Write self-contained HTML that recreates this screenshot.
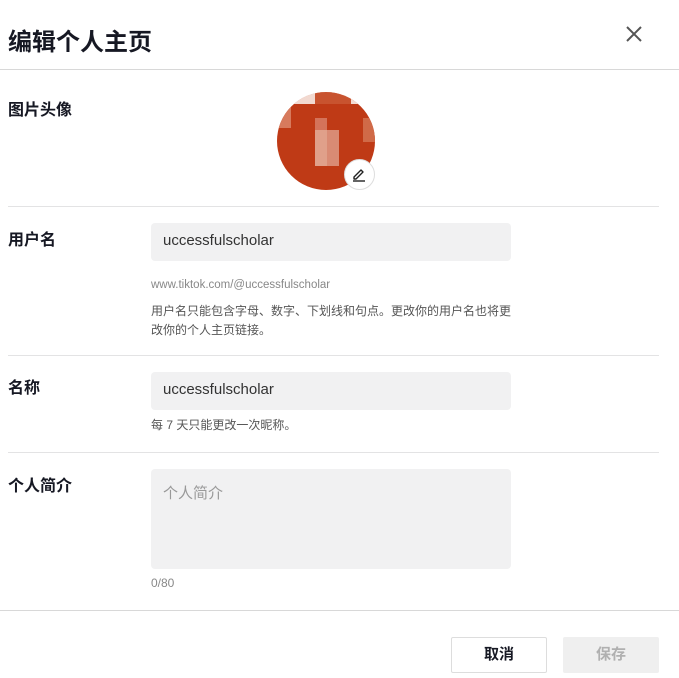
<!DOCTYPE html>
<html><head><meta charset="utf-8"><style>
*{margin:0;padding:0;box-sizing:border-box}
body{width:679px;height:678px;background:#fff;font-family:"Liberation Sans","Noto Sans CJK SC",sans-serif;color:#161823;position:relative;overflow:hidden}
.a{position:absolute}
.h1{left:8px;top:22px;font-size:24px;font-weight:bold}
.line{height:1px;background:#e3e3e4}
.lab{left:8px;font-size:16px;font-weight:bold}
.inp{background:#f1f1f2;border-radius:4px;left:151px;width:360px;height:38px;font-size:15px;color:#333;padding:9px 12px}
.small{left:151px;font-size:12px;color:#555;line-height:19px}
.btn{border-radius:2px;font-size:15px;font-weight:bold;text-align:center;line-height:34px}
</style></head><body>
<div class="a h1">编辑个人主页</div>
<svg class="a" style="left:625px;top:25px" width="18" height="18" viewBox="0 0 18 18"><path d="M2 2L16 16M16 2L2 16" stroke="#555" stroke-width="2"/></svg>
<div class="a line" style="left:0;top:69px;width:679px;background:#d8d8d8"></div>

<div class="a lab" style="top:96px">图片头像</div>
<div class="a" style="left:277px;top:92px;width:98px;height:98px;border-radius:50%;overflow:hidden;background:#bf3a16">
<div class="a" style="left:0;top:0;width:98px;height:12px;background:#f3dcd4"></div>
<div class="a" style="left:14px;top:0;width:24px;height:12px;background:#f2d9d0"></div>
<div class="a" style="left:38px;top:0;width:36px;height:12px;background:#c8532f"></div>
<div class="a" style="left:0;top:12px;width:14px;height:24px;background:#d77a5d"></div>
<div class="a" style="left:38px;top:26px;width:12px;height:12px;background:#d4735a"></div>
<div class="a" style="left:38px;top:38px;width:12px;height:36px;background:#e0a08a"></div>
<div class="a" style="left:50px;top:38px;width:12px;height:36px;background:#d98b74"></div>
<div class="a" style="left:86px;top:26px;width:12px;height:24px;background:#d06a48"></div>
</div>
<div class="a" style="left:344px;top:159px;width:31px;height:31px;border-radius:50%;background:#fff;border:1px solid #ddd"></div>
<svg class="a" style="left:351px;top:166px" width="16" height="16" viewBox="0 0 16 16"><path d="M3 11L10 4L12 6L5 13H3Z" fill="none" stroke="#222" stroke-width="1.4" stroke-linejoin="round"/><path d="M2 15H14" stroke="#222" stroke-width="1.4"/></svg>
<div class="a line" style="left:8px;top:206px;width:651px"></div>

<div class="a lab" style="top:226px">用户名</div>
<div class="a inp" style="top:223px">uccessfulscholar</div>
<div class="a small" style="top:276px;color:#888;font-size:11.5px">www.tiktok.com/@uccessfulscholar</div>
<div class="a small" style="top:302px;width:365px">用户名只能包含字母、数字、下划线和句点。更改你的用户名也将更改你的个人主页链接。</div>
<div class="a line" style="left:8px;top:355px;width:651px"></div>

<div class="a lab" style="top:374px">名称</div>
<div class="a inp" style="top:372px">uccessfulscholar</div>
<div class="a small" style="top:416px">每 7 天只能更改一次昵称。</div>
<div class="a line" style="left:8px;top:452px;width:651px"></div>

<div class="a lab" style="top:472px">个人简介</div>
<div class="a inp" style="top:469px;height:100px;color:#999;padding-top:13px">个人简介</div>
<div class="a small" style="top:574px;color:#888">0/80</div>
<div class="a line" style="left:0;top:610px;width:679px;background:#d8d8d8"></div>

<div class="a btn" style="left:451px;top:637px;width:96px;height:36px;border:1px solid #ddd;color:#161823">取消</div>
<div class="a btn" style="left:563px;top:637px;width:96px;height:36px;background:#efefef;color:#b0b0b0;line-height:36px">保存</div>
</body></html>
